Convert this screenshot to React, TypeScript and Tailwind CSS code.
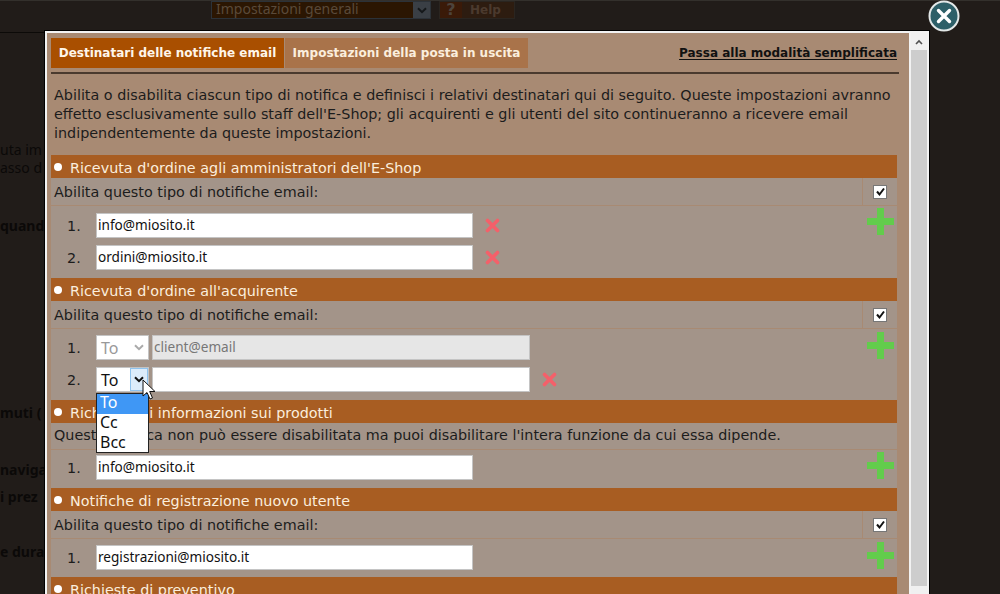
import React from "react";

const sans = "font-['DejaVu_Sans',sans-serif]";
const field = "font-['Noto_Sans',sans-serif]";

const Check = () => (
  <span className="flex h-[14px] w-[14px] items-center justify-center border border-[#777] bg-white">
    <svg width="11" height="11" viewBox="0 0 11 11">
      <path d="M2 5.5 L4.5 8.5 L9 2.5" fill="none" stroke="#111" strokeWidth="2" />
    </svg>
  </span>
);

const Plus = () => (
  <svg width="27" height="27" viewBox="0 0 27 27" className="block">
    <path d="M10 0h7v10h10v7H17v10h-7V17H0v-7h10z" fill="#62cc4c" />
  </svg>
);

const Remove = () => (
  <svg width="15" height="15" viewBox="0 0 15 15" className="block">
    <path d="M2.5 2.5 L12.5 12.5 M12.5 2.5 L2.5 12.5" stroke="#f4606a" strokeWidth="3.6" strokeLinecap="round" />
  </svg>
);

const Chevron = ({ color = "#111" }: { color?: string }) => (
  <svg width="10" height="7" viewBox="0 0 10 7" className="block">
    <path d="M1 1.2 L5 5.2 L9 1.2" fill="none" stroke={color} strokeWidth="2" />
  </svg>
);

const Heading = ({ title }: { title: string }) => (
  <div className="flex h-[23px] items-center gap-2 bg-[#a85d22] pl-[3px] text-[14.35px] text-[#fbeedd]">
    <span className="h-2 w-2 rounded-full bg-white" />
    <span className="pt-[5px]">{title}</span>
  </div>
);

const EnableRow = () => (
  <div className="flex h-[28px] border-b border-[#a88a73] bg-[#a39489] text-[14.35px] text-[#1c1c1c]">
    <div className="flex flex-1 items-center pl-[3px] pt-[3px]">Abilita questo tipo di notifiche email:</div>
    <div className="flex w-[35px] items-center justify-center border-l border-[#a88a73]">
      <Check />
    </div>
  </div>
);

const EmailInput = ({ value }: { value: string }) => (
  <div className={`flex h-[25px] w-[377px] items-center border border-[#c4c4c4] bg-white pl-[1px] text-[13.6px] text-[#111] ${field}`}>
    {value}
  </div>
);

const EmailRow = ({ n, value, remove }: { n: number; value: string; remove?: boolean }) => (
  <div className="flex h-[25px] items-center">
    <span className="w-[45px] pl-[16px] pt-[2px] text-[14.35px] text-[#1c1c1c]">{n}.</span>
    <EmailInput value={value} />
    {remove && (
      <span className="ml-[12px]">
        <Remove />
      </span>
    )}
  </div>
);

export default function App() {
  return (
    <div className={`relative h-[594px] w-[1000px] overflow-hidden bg-[#211c19] ${sans}`}>
      {/* dimmed page behind the dialog */}
      <div className="flex h-[32px] items-start gap-[8px] border-t border-[#33302c] pl-[211px]">
        <div className="flex h-[18px] w-[220px] border border-[#2c3238] bg-[#2b1602] text-[14px] leading-[13px] text-[#5a4a3a]">
          <span className={`flex-1 overflow-hidden whitespace-nowrap pl-1 ${field}`}>Impostazioni generali</span>
          <span className="flex w-[17px] items-center justify-center bg-[#3a3f45]">
            <Chevron color="#15181a" />
          </span>
        </div>
        <div className="flex h-[18px] w-[76px] items-center border border-[#2a2520] bg-[#2d1c10] text-[12px] font-bold text-[#4b3a2e]">
          <span className="w-[22px] bg-[#3a1a08] text-center text-[16px] leading-[16px] text-[#4d443c]">?</span>
          <span className="pl-[8px]">Help</span>
        </div>
      </div>
      <div className="h-px w-[45px] bg-[#0c0a08]" />
      <div className={`flex flex-col text-[14px] font-bold leading-[18px] text-[#0b0908] ${field}`}>
        <span className="mt-[108px] font-normal">uta im</span>
        <span className="font-normal">asso d</span>
        <span className="mt-[40px]">quand</span>
        <span className="mt-[169px]">muti (</span>
        <span className="mt-[39px]">naviga</span>
        <span className="mt-[9px]">i prez</span>
        <span className="mt-[37px]">e dura</span>
      </div>

      {/* dialog */}
      <div className="absolute left-[45px] top-[31px] flex h-[600px] w-[884px] border-2 border-b-0 border-[#f2f2f2] shadow-[0_0_0_1px_#000]">
        <div className="flex-1 overflow-hidden bg-[#a88a73] pl-[4px] pr-[12px] pt-[5px]">
          <div className="flex h-[30px] items-center text-[12px] font-bold">
            <span className="flex h-full w-[233px] items-center justify-center bg-[#a94f00] text-[#fff6ea]">
              Destinatari delle notifiche email
            </span>
            <span className="ml-px flex h-full w-[243px] items-center justify-center bg-[#a9734a] text-[#fbeedd]">
              Impostazioni della posta in uscita
            </span>
            <span className="ml-auto text-[#111] underline underline-offset-2">Passa alla modalità semplificata</span>
          </div>
          <div className="mr-[-2px] mt-[4px] h-[2px] bg-[#4a3a2e]" />
          <p className="mt-[12px] whitespace-nowrap pl-[3px] text-[14.35px] leading-[19px] text-[#1c1c1c]">
            Abilita o disabilita ciascun tipo di notifica e definisci i relativi destinatari qui di seguito. Queste impostazioni avranno
            <br />
            effetto esclusivamente sullo staff dell'E-Shop; gli acquirenti e gli utenti del sito continueranno a ricevere email
            <br />
            indipendentemente da queste impostazioni.
          </p>

          <div className="mt-[12px]">
            <Heading title="Ricevuta d'ordine agli amministratori dell'E-Shop" />
            <EnableRow />
            <div className="relative flex h-[72px] flex-col gap-[7px] bg-[#a39489] pt-[7px]">
              <EmailRow n={1} value="info@miosito.it" remove />
              <EmailRow n={2} value="ordini@miosito.it" remove />
              <div className="absolute right-[3px] top-[2px]">
                <Plus />
              </div>
            </div>

            <Heading title="Ricevuta d'ordine all'acquirente" />
            <EnableRow />
            <div className="relative flex h-[71px] flex-col gap-[7px] bg-[#a39489] pt-[6px]">
              <div className="flex h-[25px] items-center">
                <span className="w-[45px] pl-[16px] pt-[3px] text-[14.35px] text-[#1c1c1c]">1.</span>
                <div className={`flex h-[25px] w-[53px] items-center justify-between border border-[#c4c4c4] bg-white px-[4px] text-[16px] text-[#999] ${field}`}>
                  To
                  <Chevron color="#aaa" />
                </div>
                <div className={`ml-[3px] flex h-[25px] w-[378px] items-center border border-[#c4c4c4] bg-[#e6e6e6] pl-[1px] text-[13.6px] text-[#777] ${field}`}>
                  client@email
                </div>
              </div>
              <div className="flex h-[25px] items-center">
                <span className="w-[45px] pl-[16px] pt-[2px] text-[14.35px] text-[#1c1c1c]">2.</span>
                <div className={`flex h-[25px] w-[53px] items-center border border-[#c4c4c4] bg-white pl-[4px] text-[16px] text-[#111] ${field}`}>
                  <span className="flex-1">To</span>
                  <span className="flex h-full w-[18px] items-center justify-center border border-[#8fc3ee] bg-[#dcecfb]">
                    <Chevron />
                  </span>
                </div>
                <div className="ml-[3px] h-[25px] w-[378px] border border-[#c4c4c4] bg-white" />
                <span className="ml-[12px]">
                  <Remove />
                </span>
              </div>
              <div className="absolute right-[3px] top-[3px]">
                <Plus />
              </div>
            </div>

            <Heading title="Richieste di informazioni sui prodotti" />
            <div className="flex h-[27px] items-center whitespace-nowrap border-b border-[#a88a73] bg-[#a39489] pl-[3px] text-[14.35px] text-[#1c1c1c]">
              Questa notifica non può essere disabilitata ma puoi disabilitare l'intera funzione da cui essa dipende.
            </div>
            <div className="relative h-[38px] bg-[#a39489] pt-[5px]">
              <EmailRow n={1} value="info@miosito.it" />
              <div className="absolute right-[3px] top-[2px]">
                <Plus />
              </div>
            </div>

            <Heading title="Notifiche di registrazione nuovo utente" />
            <EnableRow />
            <div className="relative h-[38px] bg-[#a39489] pt-[6px]">
              <EmailRow n={1} value="registrazioni@miosito.it" />
              <div className="absolute right-[3px] top-[3px]">
                <Plus />
              </div>
            </div>

            <Heading title="Richieste di preventivo" />
          </div>
        </div>

        {/* scrollbar */}
        <div className="flex w-[18px] flex-col border-l-2 border-[#f2f2f2] bg-[#f0f0f0]">
          <div className="flex h-[17px] items-center justify-center">
            <svg width="8" height="6" viewBox="0 0 8 6">
              <path d="M1 5 L4 2 L7 5" fill="none" stroke="#505050" strokeWidth="1.6" />
            </svg>
          </div>
          <div className="h-[536px] bg-[#cdcdcd]" />
        </div>
      </div>

      {/* open dropdown */}
      <div className={`absolute left-[96px] top-[393px] flex h-[60px] w-[53px] flex-col border border-[#222] bg-white text-[16px] leading-[17px] text-[#111] ${field}`}>
        <span className="h-[20px] bg-[#3f97f5] pl-[3px] text-white">To</span>
        <span className="h-[20px] pl-[3px]">Cc</span>
        <span className="h-[18px] pl-[3px]">Bcc</span>
      </div>

      {/* pointer */}
      <svg width="16" height="22" viewBox="0 0 16 22" className="absolute left-[142px] top-[379px]">
        <path d="M1 1 V17 L5 13.5 L8 20 L10.5 19 L7.7 12.5 L13 12.5 Z" fill="#fff" stroke="#111" strokeWidth="1" />
      </svg>

      {/* close button */}
      <svg width="32" height="32" viewBox="0 0 32 32" className="absolute left-[928px] top-[0px]">
        <circle cx="16" cy="16" r="14.5" fill="#2d5f68" stroke="#e3e8e8" strokeWidth="2" />
        <path d="M10.5 10.5 L21.5 21.5 M21.5 10.5 L10.5 21.5" stroke="#fff" strokeWidth="3.4" strokeLinecap="round" />
      </svg>
    </div>
  );
}
